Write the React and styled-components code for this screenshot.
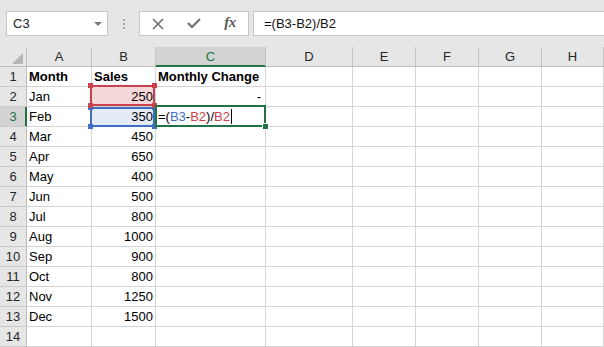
import React from 'react';
import styled, { createGlobalStyle } from 'styled-components';

const GlobalStyle = createGlobalStyle`
  html, body { margin: 0; padding: 0; background: #fff; }
  body { font-family: "Liberation Sans", Arial, sans-serif; overflow: hidden; }
  *, *::before, *::after { box-sizing: border-box; }
`;

const GREEN = '#217346';
const RED = '#c8414b';
const BLUE = '#3e6fc4';

const Window = styled.div`
  width: 604px;
  height: 347px;
  overflow: hidden;
  background: #fff;
  display: flex;
  flex-direction: column;
`;

const TopBar = styled.div`
  flex: 0 0 47px;
  height: 47px;
  background: #e6e6e6;
  display: flex;
  align-items: flex-start;
  padding: 11px 0 0 6px;
`;

const NameBox = styled.div`
  width: 102px;
  height: 25px;
  background: #fff;
  border: 1px solid #c6c6c6;
  display: flex;
  align-items: center;
  padding-left: 6px;
  font-size: 13px;
  color: #222;
`;

const DropArrow = styled.span`
  margin-left: auto;
  margin-right: 5px;
  width: 0;
  height: 0;
  border-left: 4px solid transparent;
  border-right: 4px solid transparent;
  border-top: 4px solid #7a7a7a;
`;

const Grip = styled.div`
  display: flex;
  flex-direction: column;
  gap: 2px;
  margin: 8px 14px 0 15px;
`;

const GripDot = styled.span`
  width: 2px;
  height: 2px;
  background: #a8a8a8;
`;

const FxBox = styled.div`
  width: 110px;
  height: 25px;
  background: #fff;
  border: 1px solid #c6c6c6;
  display: grid;
  grid-template-columns: repeat(3, 36px);
  align-items: center;
  justify-items: center;
`;

const FxLabel = styled.span`
  font-family: "Liberation Serif", "Times New Roman", serif;
  font-style: italic;
  font-weight: 700;
  font-size: 15px;
  color: #5a5a5a;
  letter-spacing: -0.5px;
  margin-top: -2px;
`;

const FormulaInput = styled.div`
  flex: 1;
  height: 25px;
  margin-left: 4px;
  background: #fff;
  border: 1px solid #c6c6c6;
  border-right: none;
  display: flex;
  align-items: center;
  padding-left: 10px;
  font-size: 13px;
  color: #111;
`;

const Sheet = styled.div`
  display: grid;
  grid-template-columns: 27px 65px 64px 110px 87px 63px 63px 63px 62px;
  grid-auto-rows: 20px;
`;

const Corner = styled.div`
  background: #e6e6e6;
  border-right: 1px solid #bdbdbd;
  border-bottom: 1px solid #bdbdbd;
  display: flex;
  justify-content: flex-end;
  align-items: flex-end;
  padding: 0 3px 2px 0;
`;

const Triangle = styled.span`
  width: 0;
  height: 0;
  border-left: 11px solid transparent;
  border-bottom: 11px solid #b5b5b5;
`;

const ColHead = styled.div`
  background: ${p => (p.$active ? '#d3d3d3' : '#e6e6e6')};
  color: ${p => (p.$active ? GREEN : '#262626')};
  border-right: 1px solid #c2c2c2;
  border-bottom: 1px solid ${p => (p.$active ? GREEN : '#bdbdbd')};
  box-shadow: ${p => (p.$active ? `inset 0 -1px ${GREEN}` : 'none')};
  font-size: 13px;
  line-height: 20px;
  text-align: center;
`;

const RowHead = styled.div`
  background: ${p => (p.$active ? '#d3d3d3' : '#e6e6e6')};
  color: ${p => (p.$active ? GREEN : '#262626')};
  border-right: 1px solid ${p => (p.$active ? GREEN : '#bdbdbd')};
  border-bottom: 1px solid #cacaca;
  box-shadow: ${p => (p.$active ? `inset -1px 0 ${GREEN}` : 'none')};
  font-size: 13px;
  line-height: 20px;
  text-align: center;
`;

const Cell = styled.div`
  position: relative;
  border-right: 1px solid #d4d4d4;
  border-bottom: 1px solid #d4d4d4;
  background: ${p => p.$fill || '#fff'};
  font-size: 13px;
  line-height: 20px;
  font-weight: ${p => (p.$bold ? 700 : 400)};
  text-align: ${p => p.$align || 'left'};
  padding: 0 ${p => p.$padRight || 2}px 0 2px;
  white-space: nowrap;
  color: #000;
`;

const RangeBox = styled.div`
  position: absolute;
  pointer-events: none;
  border: 2px solid ${p => p.$color};
  z-index: ${p => p.$z};
  top: ${p => p.$top}px;
  left: ${p => p.$left}px;
  right: ${p => p.$right}px;
  bottom: ${p => p.$bottom}px;
`;

const Handle = styled.span`
  position: absolute;
  width: 5px;
  height: 5px;
  background: ${p => p.$color};
  ${p => (p.$v === 'top' ? 'top: -4px;' : 'bottom: -4px;')}
  ${p => (p.$h === 'left' ? 'left: -4px;' : 'right: -4px;')}
`;

const FillHandle = styled.span`
  position: absolute;
  width: 7px;
  height: 7px;
  right: -5px;
  bottom: -5px;
  background: ${GREEN};
  border: 1px solid #fff;
`;

const Ref = styled.span`
  color: ${p => p.$color};
`;

const Caret = styled.span`
  display: inline-block;
  width: 1px;
  height: 15px;
  background: #000;
  vertical-align: -3px;
  margin-left: 1px;
`;

const XIcon = () => (
  <svg width="12" height="12" viewBox="0 0 12 12">
    <path d="M1 1 L11 11 M11 1 L1 11" stroke="#707070" strokeWidth="1.6" fill="none" />
  </svg>
);

const CheckIcon = () => (
  <svg width="14" height="11" viewBox="0 0 14 11">
    <path d="M1 5 L5 9 L13 1" stroke="#707070" strokeWidth="2.2" fill="none" />
  </svg>
);

const Corners = ({ color }) => (
  <>
    <Handle $color={color} $v="top" $h="left" />
    <Handle $color={color} $v="top" $h="right" />
    <Handle $color={color} $v="bottom" $h="left" />
    <Handle $color={color} $v="bottom" $h="right" />
  </>
);

const letters = ['A', 'B', 'C', 'D', 'E', 'F', 'G', 'H'];

const data = [
  ['Jan', '250'],
  ['Feb', '350'],
  ['Mar', '450'],
  ['Apr', '650'],
  ['May', '400'],
  ['Jun', '500'],
  ['Jul', '800'],
  ['Aug', '1000'],
  ['Sep', '900'],
  ['Oct', '800'],
  ['Nov', '1250'],
  ['Dec', '1500'],
];

const Formula = () => (
  <>
    =(<Ref $color={BLUE}>B3</Ref>-<Ref $color={RED}>B2</Ref>)/<Ref $color={RED}>B2</Ref>
  </>
);

const Blanks = ({ n }) => Array.from({ length: n }, (_, i) => <Cell key={i} />);

export default function App() {
  const rows = [];
  rows.push(
    <React.Fragment key="r1">
      <RowHead>1</RowHead>
      <Cell $bold>Month</Cell>
      <Cell $bold>Sales</Cell>
      <Cell $bold>Monthly Change</Cell>
      <Blanks n={5} />
    </React.Fragment>
  );
  data.forEach(([m, v], i) => {
    const r = i + 2;
    let bCell;
    let cCell;
    if (r === 2) {
      bCell = (
        <Cell $align="right" $fill="#f4d7d8">
          {v}
          <RangeBox $color={RED} $z={3} $top={-2} $left={-2} $right={0} $bottom={0}>
            <Corners color={RED} />
          </RangeBox>
        </Cell>
      );
      cCell = (
        <Cell $align="right" $padRight={4}>
          -
        </Cell>
      );
    } else if (r === 3) {
      bCell = (
        <Cell $align="right" $fill="#e4ebf6">
          {v}
          <RangeBox $color={BLUE} $z={2} $top={0} $left={-2} $right={0} $bottom={-1}>
            <Corners color={BLUE} />
          </RangeBox>
        </Cell>
      );
      cCell = (
        <Cell>
          <Formula />
          <Caret />
          <RangeBox $color={GREEN} $z={4} $top={-2} $left={-1} $right={-1} $bottom={-1}>
            <FillHandle />
          </RangeBox>
        </Cell>
      );
    } else {
      bCell = <Cell $align="right">{v}</Cell>;
      cCell = <Cell />;
    }
    rows.push(
      <React.Fragment key={`r${r}`}>
        <RowHead $active={r === 3}>{r}</RowHead>
        <Cell>{m}</Cell>
        {bCell}
        {cCell}
        <Blanks n={5} />
      </React.Fragment>
    );
  });
  rows.push(
    <React.Fragment key="r14">
      <RowHead>14</RowHead>
      <Blanks n={8} />
    </React.Fragment>
  );

  return (
    <>
      <GlobalStyle />
      <Window>
        <TopBar>
          <NameBox>
            C3
            <DropArrow />
          </NameBox>
          <Grip>
            <GripDot />
            <GripDot />
            <GripDot />
          </Grip>
          <FxBox>
            <XIcon />
            <CheckIcon />
            <FxLabel>fx</FxLabel>
          </FxBox>
          <FormulaInput>=(B3-B2)/B2</FormulaInput>
        </TopBar>
        <Sheet>
          <Corner>
            <Triangle />
          </Corner>
          {letters.map(l => (
            <ColHead key={l} $active={l === 'C'}>
              {l}
            </ColHead>
          ))}
          {rows}
        </Sheet>
      </Window>
    </>
  );
}
